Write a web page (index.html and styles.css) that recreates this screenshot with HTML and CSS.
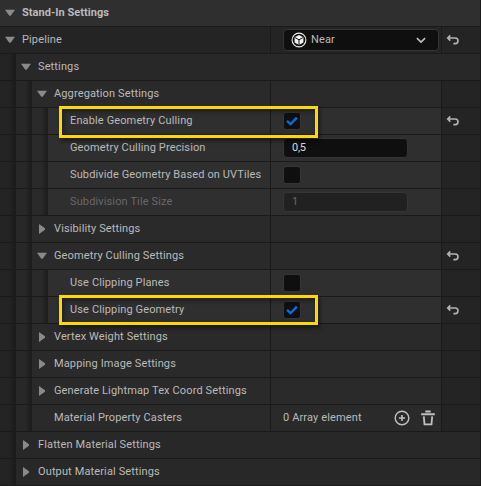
FILE: index.html
```
<!DOCTYPE html>
<html lang="en">
<head>
<meta charset="utf-8">
<title>Stand-In Settings</title>
<link rel="stylesheet" href="styles.css">
</head>
<body>
<svg class="defs" aria-hidden="true">
  <symbol id="down" viewBox="0 0 10 8"><path d="M0 .8h10L5.7 6.8H4.3z" fill="#8a8a8a"/></symbol>
  <symbol id="right" viewBox="0 0 8 12"><path d="M1 1v10l6-4.3V5.3z" fill="#8a8a8a"/></symbol>
  <symbol id="undo" viewBox="0 0 14 12"><path d="M4.3 1.4 1.7 4l2.6 2.6M2 4h7.2a2.8 2.8 0 0 1 0 5.6H7.4" fill="none" stroke="#b4b4b4" stroke-width="1.6"/></symbol>
  <symbol id="check" viewBox="0 0 16 16"><path d="M3 7.8 6.6 11.2 12.8 4.6" fill="none" stroke="#0070e0" stroke-width="2.3"/></symbol>
</svg>
<main class="panel">
  <div class="row title"><div class="name"><svg class="down"><use href="#down"/></svg><span>Stand-In Settings</span></div></div>
  <div class="row l0"><div class="name"><svg class="down"><use href="#down"/></svg><span>Pipeline</span></div>
    <div class="value"><div class="combo">
      <svg class="asset" viewBox="0 0 16 16"><circle cx="8" cy="8" r="6.9" fill="none" stroke="#eee" stroke-width="1.1"/><path d="M8 3 12.4 5.3v5.2L8 13l-4.4-2.5V5.3z" fill="#f2f2f2"/><path d="M4 5.6 8 7.8l4-2.2M8 7.8V13" fill="none" stroke="#111" stroke-width="1"/></svg>
      <span>Near</span>
      <svg class="chev" viewBox="0 0 10 7"><path d="m.9 1.1 4.1 4 4.1-4" fill="none" stroke="#c0c0c0" stroke-width="1.6"/></svg>
    </div></div><div class="reset"><svg><use href="#undo"/></svg></div></div>
  <div class="row l1"><i></i><div class="name"><svg class="down"><use href="#down"/></svg><span>Settings</span></div></div>
  <div class="row l2"><i></i><i></i><div class="name"><svg class="down"><use href="#down"/></svg><span>Aggregation Settings</span></div><div class="value"></div><div class="reset"></div></div>
  <div class="row l3"><i></i><i></i><i></i><div class="name leaf"><span>Enable Geometry Culling</span></div><div class="value"><div class="box"><svg><use href="#check"/></svg></div></div><div class="reset"><svg><use href="#undo"/></svg></div><div class="mark tall"></div></div>
  <div class="row l3"><i></i><i></i><i></i><div class="name leaf"><span>Geometry Culling Precision</span></div><div class="value"><div class="field">0,5</div></div><div class="reset"></div></div>
  <div class="row l3"><i></i><i></i><i></i><div class="name leaf"><span>Subdivide Geometry Based on UVTiles</span></div><div class="value"><div class="box"></div></div><div class="reset"></div></div>
  <div class="row l3 off"><i></i><i></i><i></i><div class="name leaf"><span>Subdivision Tile Size</span></div><div class="value"><div class="field">1</div></div><div class="reset"></div></div>
  <div class="row l2"><i></i><i></i><div class="name"><svg class="right"><use href="#right"/></svg><span>Visibility Settings</span></div><div class="value"></div><div class="reset"></div></div>
  <div class="row l2"><i></i><i></i><div class="name"><svg class="down"><use href="#down"/></svg><span>Geometry Culling Settings</span></div><div class="value"></div><div class="reset"><svg><use href="#undo"/></svg></div></div>
  <div class="row l3"><i></i><i></i><i></i><div class="name leaf"><span>Use Clipping Planes</span></div><div class="value"><div class="box"></div></div><div class="reset"></div></div>
  <div class="row l3"><i></i><i></i><i></i><div class="name leaf"><span>Use Clipping Geometry</span></div><div class="value"><div class="box"><svg><use href="#check"/></svg></div></div><div class="reset"><svg><use href="#undo"/></svg></div><div class="mark"></div></div>
  <div class="row l2"><i></i><i></i><div class="name"><svg class="right"><use href="#right"/></svg><span>Vertex Weight Settings</span></div><div class="value"></div><div class="reset"></div></div>
  <div class="row l2"><i></i><i></i><div class="name"><svg class="right"><use href="#right"/></svg><span>Mapping Image Settings</span></div><div class="value"></div><div class="reset"></div></div>
  <div class="row l2"><i></i><i></i><div class="name"><svg class="right"><use href="#right"/></svg><span>Generate Lightmap Tex Coord Settings</span></div><div class="value"></div><div class="reset"></div></div>
  <div class="row l2"><i></i><i></i><div class="name leaf"><span>Material Property Casters</span></div>
    <div class="value"><span class="count">0 Array element</span>
      <svg class="add" viewBox="0 0 16 16"><circle cx="8" cy="8" r="6.8" fill="none" stroke="#c0c0c0" stroke-width="1.4"/><path d="M8 4.9v6.2M4.9 8h6.2" stroke="#c0c0c0" stroke-width="1.6"/></svg>
      <svg class="trash" viewBox="0 0 14 16"><path d="M4.3 1.5h5.4M.2 4.2h13.6" stroke="#c0c0c0" stroke-width="1.9"/><path d="m2.8 6.4.7 8h7l.7-8" fill="none" stroke="#c0c0c0" stroke-width="1.8"/></svg>
    </div><div class="reset"></div></div>
  <div class="row l1"><i></i><div class="name"><svg class="right"><use href="#right"/></svg><span>Flatten Material Settings</span></div></div>
  <div class="row l1"><i></i><div class="name"><svg class="right"><use href="#right"/></svg><span>Output Material Settings</span></div></div>
</main>
</body>
</html>
```
FILE: styles.css
```
* { box-sizing: border-box; }
body { margin: 0; background: #1a1a1a; }
.defs { position: absolute; width: 0; height: 0; }
.panel {
  width: 481px;
  padding-right: 1px;
  font: 11px/26px Roboto, sans-serif;
  letter-spacing: 0.13px;
  color: #bababa;
  white-space: nowrap;
}
.row {
  position: relative;
  display: flex;
  height: 27px;
  border-bottom: 1px solid #1a1a1a;
}
.title { background: #2f2f2f; font-weight: 700; letter-spacing: 0.04px; }
.l0 { background: #242424; }
.l1 { background: #282828; }
.l2 { background: #2a2a2a; }
.l3 { background: #2f2f2f; }

/* Nesting gutters, shaded toward the child column */
.row i { flex: none; width: 16px; background: linear-gradient(90deg, #2a2a2a 9px, #1c1c1c 16px); }
.row i:first-child { background: linear-gradient(90deg, #242424 9px, #1a1a1a 16px); }
.row i:nth-child(2) { background: linear-gradient(90deg, #282828 9px, #1b1b1b 16px); }

.name { flex: 1; min-width: 0; display: flex; align-items: center; padding-left: 5px; }
.name svg { flex: none; }
.name .down { width: 10px; height: 8px; margin: 0 7px 0 0; }
.name .right { width: 8px; height: 12px; margin: 0 8px 0 1px; }
.leaf { padding-left: 22px; }
.value {
  flex: none;
  width: 171px;
  display: flex;
  align-items: center;
  padding-left: 12px;
  border-left: 1px solid #1a1a1a;
}
.reset {
  flex: none;
  width: 39px;
  padding: 7px 0 0 4px;
  border-left: 1px solid #1a1a1a;
  background: #242424;
}
.reset svg { display: block; width: 14px; height: 12px; }

.combo {
  display: flex;
  align-items: center;
  width: 156px;
  height: 22px;
  padding: 0 12px 0 7px;
  border: 1px solid #343434;
  border-radius: 4px;
  background: #0f0f0f;
}
.asset { width: 16px; height: 16px; margin-right: 4px; }
.chev { width: 10px; height: 7px; margin-left: auto; }
.box {
  width: 18px;
  height: 18px;
  border: 1px solid #353535;
  border-radius: 3px;
  background: #0f0f0f;
}
.box svg { display: block; width: 16px; height: 16px; }
.field {
  width: 125px;
  height: 20px;
  padding-left: 8px;
  border: 1px solid #353535;
  border-radius: 4px;
  background: #0f0f0f;
  color: #dedede;
  line-height: 17px;
  letter-spacing: -0.3px;
}
.off .name, .off .field { color: #686868; }
.off .field { background: #212121; }
.count { width: 111px; }
.add { width: 16px; height: 16px; }
.trash { width: 14px; height: 16px; margin-left: 11px; }

/* Highlight frames over the rows */
.mark {
  position: absolute;
  z-index: 2;
  left: 59px;
  top: -2px;
  width: 259px;
  height: 30px;
  border: 3px solid #ffd800;
  box-shadow: 2px 3px 4px rgb(0 0 0 / 45%), inset 2px 3px 4px rgb(0 0 0 / 35%);
}
.mark.tall { height: 32px; }
```
